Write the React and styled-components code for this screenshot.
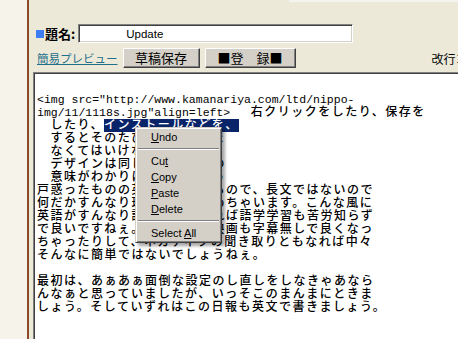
import React from 'react';
import styled, { createGlobalStyle } from 'styled-components';

const GlobalStyle = createGlobalStyle`
  html, body {
    margin: 0;
    padding: 0;
    background: #ece9d8;
    overflow: hidden;
  }
`;

const Page = styled.div`
  display: flex;
  width: 458px;
  height: 339px;
  overflow: hidden;
`;

const Gutter = styled.div`
  flex: none;
  width: 27px;
  background: #f6f3eb;
  border-right: 2px solid #8c4a28;
`;

const Main = styled.div`
  flex: 1;
  min-width: 0;
  display: flex;
  flex-direction: column;
  padding-left: 4px;
  background: #ece9d8;
  overflow: hidden;
`;

const TopEdge = styled.div`
  flex: none;
  height: 2px;
  margin-left: 256px;
  background: #f4f3ee;
`;

const TitleRow = styled.div`
  display: flex;
  align-items: center;
  height: 19px;
  margin-top: 22px;
  padding-left: 3px;
`;

const Marker = styled.span`
  flex: none;
  width: 8px;
  height: 8px;
  margin-right: 1px;
  background: #3d7cf5;
`;

const Label = styled.span`
  margin-right: 3px;
  font-family: "Noto Sans CJK JP", sans-serif;
  font-size: 13px;
  font-weight: 700;
  color: #000;
`;

const TitleInput = styled.input`
  box-sizing: border-box;
  width: 275px;
  height: 19px;
  margin: 0;
  padding: 0 0 0 47px;
  border: 1px solid;
  border-color: #808080 #ffffff #ffffff #808080;
  box-shadow: inset 1px 1px 0 #404040, inset -1px -1px 0 #d4d0c8;
  background: #fff;
  font-family: "Liberation Sans", Arial, sans-serif;
  font-size: 11.5px;
  color: #000;
  outline: none;
`;

const ActionRow = styled.div`
  display: flex;
  align-items: center;
  gap: 5px;
  height: 20px;
  margin-top: 5px;
  padding-left: 4px;
  white-space: nowrap;
`;

const PreviewLink = styled.a`
  font-family: "Noto Sans CJK JP", sans-serif;
  font-size: 11.5px;
  color: #1f6f8d;
  text-decoration: underline;
  cursor: pointer;
`;

const Button = styled.button`
  box-sizing: border-box;
  flex: none;
  width: ${(p) => p.$width}px;
  height: 20px;
  margin: 0;
  padding: 0;
  border: 1px solid;
  border-color: #ffffff #404040 #404040 #ffffff;
  box-shadow: inset -1px -1px 0 #808080;
  background: #d4d0c8;
  font-family: "Noto Sans CJK JP", sans-serif;
  font-size: 13px;
  line-height: 18px;
  text-align: center;
  color: #000;
`;

const SideNote = styled.span`
  flex: none;
  margin-left: 131px;
  font-family: "Noto Sans CJK JP", sans-serif;
  font-size: 12px;
  color: #000;
`;

const Editor = styled.div`
  position: relative;
  flex: none;
  width: 440px;
  height: 300px;
  margin-top: 4px;
  padding: 18px 0 0 3px;
  border-top: 1px solid #808080;
  border-left: 1px solid #808080;
  box-shadow: inset 1px 1px 0 #404040;
  background: #fff;
`;

const Line = styled.div`
  height: 13px;
  line-height: 13px;
  white-space: pre;
  font-family: "Noto Sans CJK JP", sans-serif;
  font-size: 12px;
  font-weight: 500;
  letter-spacing: 1.5px;
  color: #000;
`;

const Ascii = styled.span`
  font-family: "Liberation Mono", monospace;
  font-size: 11.5px;
  font-weight: 400;
  letter-spacing: 0;
`;

const Selected = styled.span`
  display: inline-block;
  height: 13px;
  line-height: 13px;
  vertical-align: top;
  margin-top: 2px;
  background: #0a246a;
  color: #fff;

  & > span {
    display: block;
    margin-top: -2px;
  }
`;

const Menu = styled.div`
  position: absolute;
  left: 101px;
  top: 54px;
  box-sizing: border-box;
  width: 87px;
  padding: 1px;
  border: 1px solid;
  border-color: #d4d0c8 #404040 #404040 #d4d0c8;
  box-shadow: inset 1px 1px 0 #ffffff, inset -1px -1px 0 #808080,
    3px 3px 3px rgba(0, 0, 0, 0.35);
  background: #d4d0c8;
`;

const MenuItem = styled.div`
  height: 16px;
  padding-left: 14px;
  line-height: 16px;
  font-family: "Liberation Sans", Arial, sans-serif;
  font-size: 11px;
  color: #000;
  white-space: nowrap;
`;

const Separator = styled.div`
  display: flex;
  align-items: center;
  height: 8px;
  padding: 0 1px;

  &::after {
    content: "";
    flex: 1;
    border-top: 1px solid #808080;
    border-bottom: 1px solid #ffffff;
  }
`;

const lines = [
  '　するとそのたびに警告が出ま',
  '　なくてはいけないし、',
  '　デザインは同じような感じの',
  '　意味がわかりにくくてちょっ',
  '戸惑ったものの英語も簡単なもので、長文ではないので',
  '何だかすんなり理解できて読めちゃいます。こんな風に',
  '英語がすんなり読めるようなれば語学学習も苦労知らず',
  'で良いですねぇ。そうすれば映画も字幕無しで良くなっ',
  'ちゃったりして、ネガティブの聞き取りともなれば中々',
  'そんなに簡単ではないでしょうねぇ。',
  '',
  '最初は、あぁあぁ面倒な設定のし直しをしなきゃあなら',
  'んなぁと思っていましたが、いっそこのまんまにときま',
  'しょう。そしていずれはこの日報も英文で書きましょう。',
];

export default function App() {
  return (
    <Page>
      <GlobalStyle />
      <Gutter />
      <Main>
        <TopEdge />
        <TitleRow>
          <Marker />
          <Label>題名:</Label>
          <TitleInput readOnly value="Update" />
        </TitleRow>
        <ActionRow>
          <PreviewLink>簡易プレビュー</PreviewLink>
          <Button $width={77}>草稿保存</Button>
          <Button $width={91}>■登　録■</Button>
          <SideNote>改行コード</SideNote>
        </ActionRow>
        <Editor>
          <Line>
            <Ascii>{'<img src="http://www.kamanariya.com/ltd/nippo-'}</Ascii>
          </Line>
          <Line>
            <Ascii>{'img/11/1118s.jpg"align=left> '}</Ascii>
            {'　右クリックをしたり、保存を'}
          </Line>
          <Line>
            {'　したり、'}
            <Selected><span>インストールなどを、</span></Selected>
          </Line>
          {lines.map((text, i) => (
            <Line key={i}>{text}</Line>
          ))}
          <Menu>
            <MenuItem><u>U</u>ndo</MenuItem>
            <Separator />
            <MenuItem>Cu<u>t</u></MenuItem>
            <MenuItem><u>C</u>opy</MenuItem>
            <MenuItem><u>P</u>aste</MenuItem>
            <MenuItem><u>D</u>elete</MenuItem>
            <Separator />
            <MenuItem>Select <u>A</u>ll</MenuItem>
          </Menu>
        </Editor>
      </Main>
    </Page>
  );
}
